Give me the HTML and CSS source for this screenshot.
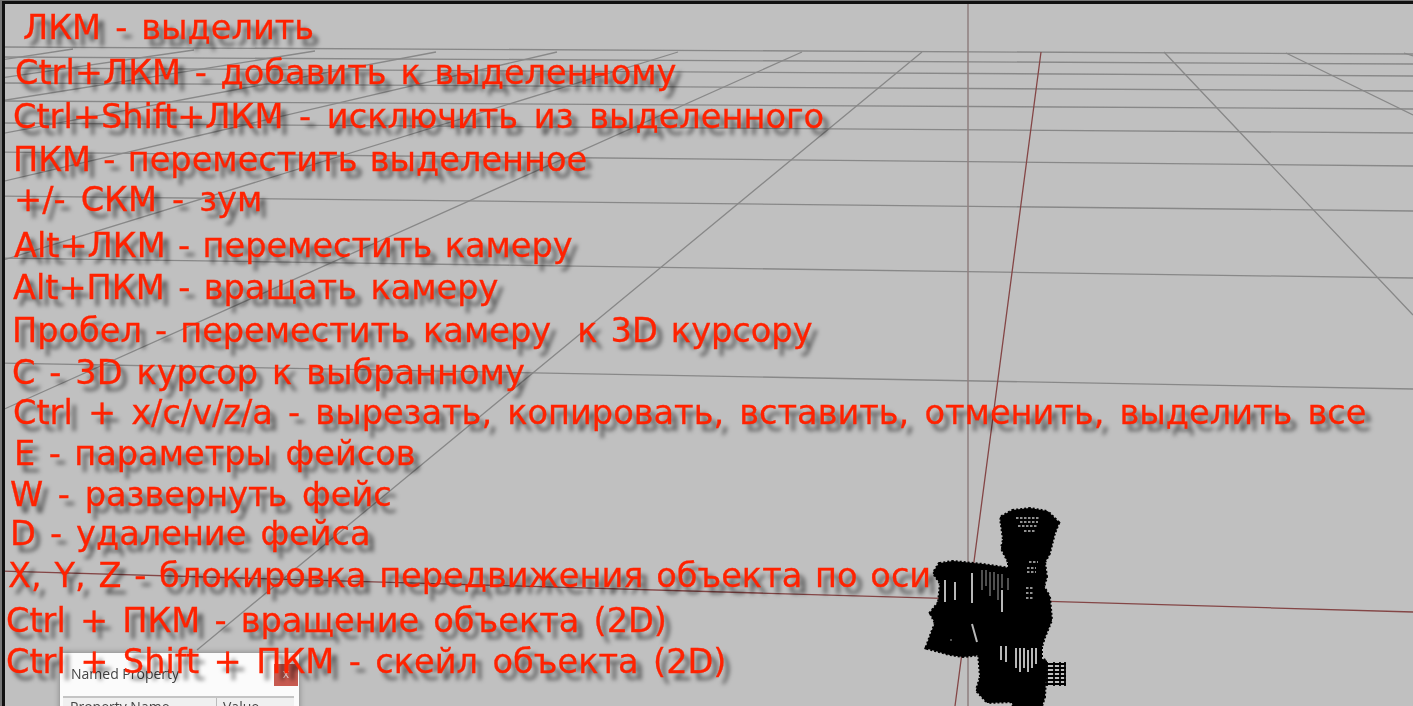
FILE: index.html
```html
<!DOCTYPE html>
<html lang="en">
<head>
  <meta charset="UTF-8" />
  <title>Hotkeys</title>
  <link rel="stylesheet" href="styles.css">
</head>
<body>
  <div class="viewport">
    <svg class="scene" width="1413" height="706" viewBox="0 0 1413 706">
      <g class="grid">
        <path d="M0 47L1413 54M0 57L1413 64M0 68L1413 76M0 83L1413 91M0 101L1413 109M0 123L1413 133M0 152L1413 166M0 196L1413 211M0 258L1413 278M0 363L1413 389"/>
        <path d="M1404 53L1413 56M1286 53L1413 115M1164 52L1413 315M922 52L197 650M802 52L0 411M678 52L0 261M557 52L0 182M436 52L0 134M315 51L0 101M194 50L0 78M73 49L0 60"/>
      </g>
      <path class="axis-y" d="M968 4V706"/>
      <path class="axis" d="M1041 52L955 706M0 571L1413 612"/>
      <g class="mesh">
        <path class="mesh-body" d="M1002 518L1013 512L1030 510L1047 513L1057 523L1053 533L1048 553L1043 562L1045 577L1042 587L1048 597L1050 620L1043 637L1040 647L1040 660L1045 662L1043 697L1040 706L1015 706L1013 700L988 701L978 690L982 677L980 653L963 655L950 653L928 647L933 633L937 623L932 613L940 603L942 583L935 573L940 565L953 563L983 566L1010 570L1010 562L1003 548L1005 540Z"/>
        <path class="mesh-fringe" d="M1002 518L1013 512L1030 510L1047 513L1057 523L1053 533L1048 553L1043 562L1045 577L1042 587L1048 597L1050 620L1043 637L1040 647L1040 660L1045 662L1043 697L1040 706M1015 706L1013 700L988 701L978 690L982 677L980 653L963 655L950 653L928 647L933 633L937 623L932 613L940 603L942 583L935 573L940 565L953 563L983 566L1010 570L1010 562L1003 548L1005 540L1002 518"/>
        <path class="mesh-arm" d="M1043 664H1066M1043 668H1066M1043 672H1066M1043 676H1066M1043 680H1066M1043 684H1066M1047 662V686M1054 662V686M1060 662V686M1065 662V686"/>
        <path class="mesh-gap" d="M1016 518H1040M1020 522H1038M1018 526H1038M1024 531H1036M1029 562H1038M1027 568H1036M1027 572H1036M1026 588H1034M1026 593H1034M1026 598H1034"/>
        <path class="mesh-slit" d="M945 580V602M955 582V600M972 573V603M1002 590V612M1016 648V668M1020 648V672M1024 648V668M1028 650V672M1032 648V668M1036 648V664M1001 646V660M1006 646V662M972 624L977 642"/>
        <path class="mesh-thin" d="M982 570V590M986 570V586M990 572V596M994 572V590M998 574V600M1002 574V588M1008 578V590M950 640H952"/>
      </g>
    </svg>

    <div class="dialog">
      <div class="dialog-title">
        <span>Named Property</span>
        <span class="dialog-close">x</span>
      </div>
      <div class="dialog-head">
        <span class="col-name">Property Name</span>
        <span class="col-value">Value</span>
      </div>
    </div>

    <div class="hints">
      <div class="hint hint-1">ЛКМ - выделить</div>
      <div class="hint hint-2">Ctrl+ЛКМ - добавить к выделенному</div>
      <div class="hint hint-3">Ctrl+Shift+ЛКМ - исключить из выделенного</div>
      <div class="hint hint-4">ПКМ - переместить выделенное</div>
      <div class="hint hint-5">+/- СКМ - зум</div>
      <div class="hint hint-6">Alt+ЛКМ - переместить камеру</div>
      <div class="hint hint-7">Alt+ПКМ - вращать камеру</div>
      <div class="hint hint-8">Пробел - переместить камеру  к 3D курсору</div>
      <div class="hint hint-9">C - 3D курсор к выбранному</div>
      <div class="hint hint-10">Ctrl + x/c/v/z/a - вырезать, копировать, вставить, отменить, выделить все</div>
      <div class="hint hint-11">E - параметры фейсов</div>
      <div class="hint hint-12">W - развернуть фейс</div>
      <div class="hint hint-13">D - удаление фейса</div>
      <div class="hint hint-14">X, Y, Z - блокировка передвижения объекта по оси</div>
      <div class="hint hint-15">Ctrl + ПКМ - вращение объекта (2D)</div>
      <div class="hint hint-16">Ctrl + Shift + ПКМ - скейл объекта (2D)</div>
    </div>
  </div>
</body>
</html>
```

FILE: styles.css
```css
* {margin: 0;padding: 0;box-sizing: border-box;}

body {
  height: 706px;
  padding: 1px 0 0 2px;
  background: #777;
  overflow: hidden;
}

.viewport {
  position: relative;
  width: 1411px;
  height: 705px;
  overflow: hidden;
  background: #c0c0c0;
  border-top: 3px solid #111;
  border-left: 3px solid #111;
}

/* 3D view behind the text */
.scene {
  position: absolute;
  top: -4px;
  left: -5px;
  filter: blur(0.5px);
}

.grid path {fill: none;stroke: #888;stroke-width: 1.3;}
.axis-y {fill: none;stroke: #8f7f7f;stroke-width: 1.5;}
.axis {fill: none;stroke: #844646;stroke-width: 1.3;}

.mesh-body {fill: #000;stroke: #000;stroke-width: 4;}
.mesh-fringe {fill: none;stroke: #000;stroke-width: 6;stroke-dasharray: 2 2;}
.mesh-arm {fill: none;stroke: #000;stroke-width: 1.8;}
.mesh-gap {fill: none;stroke: #c0c0c0;stroke-width: 1.4;stroke-dasharray: 2.5 1.5;}
.mesh-slit {fill: none;stroke: #b8b8b8;stroke-width: 2;}
.mesh-thin {fill: none;stroke: #a0a0a0;stroke-width: 1;}

/* Named Property window, mostly off screen */
.dialog {
  position: absolute;
  top: 649px;
  left: 55px;
  width: 239px;
  height: 60px;
  background: #fbfbfb;
  box-shadow: 0 0 6px rgba(0, 0, 0, 0.35);
  font-family: 'Open Sans', sans-serif;
  font-size: 14px;
  color: #444;
  filter: blur(0.4px);
}

.dialog-title {
  display: flex;
  justify-content: space-between;
  height: 43px;
  padding: 11px 1px 0 11px;
}

.dialog-close {
  width: 24px;
  height: 22px;
  background: #c75a50;
  color: #f4e0dc;
  text-align: center;
  font-size: 12px;
  line-height: 20px;
}

.dialog-head {
  display: flex;
  height: 20px;
  margin: 0 5px 0 3px;
  background: #f0f0f0;
  border-top: 2px solid #c4c4c4;
  line-height: 17px;
}

.col-name {width: 154px;padding-left: 7px;border-right: 1px solid #bbb;}
.col-value {padding-left: 6px;}

/* Hotkey list */
.hints {
  position: relative;
  font-family: 'DejaVu Sans', sans-serif;
  font-size: 33.6px;
  line-height: 38px;
  color: #ff2200;
  text-shadow: 6px 7px 4px rgba(0, 0, 0, 0.55);
  -webkit-text-stroke: 0.3px #ff2200;
  filter: blur(0.35px);
}

.hint {white-space: pre;}

.hint-1 {margin: 5px 0 0 18px;word-spacing: 3.4px;}
.hint-2 {margin: 7px 0 0 10px;word-spacing: 3.1px;}
.hint-3 {margin: 6px 0 0 8px;word-spacing: 5px;}
.hint-4 {margin: 5px 0 0 8px;word-spacing: 1.6px;}
.hint-5 {margin: 2px 0 0 9px;word-spacing: 4.4px;}
.hint-6 {margin: 8px 0 0 9px;word-spacing: 1.7px;}
.hint-7 {margin: 4px 0 0 8px;word-spacing: 2.8px;}
.hint-8 {margin: 5px 0 0 7px;word-spacing: 2.4px;}
.hint-9 {margin: 4px 0 0 7px;word-spacing: 3.2px;}
.hint-10 {margin: 2px 0 0 8px;word-spacing: 4.5px;}
.hint-11 {margin: 3px 0 0 9px;word-spacing: 2.8px;}
.hint-12 {margin: 3px 0 0 5px;word-spacing: 4px;}
.hint-13 {margin: 1px 0 0 5px;word-spacing: 3.4px;}
.hint-14 {margin: 4px 0 0 3px;word-spacing: 2.1px;}
.hint-15 {margin: 7px 0 0 1px;word-spacing: 3.5px;}
.hint-16 {margin: 3px 0 0 1px;word-spacing: 3.8px;}
```
